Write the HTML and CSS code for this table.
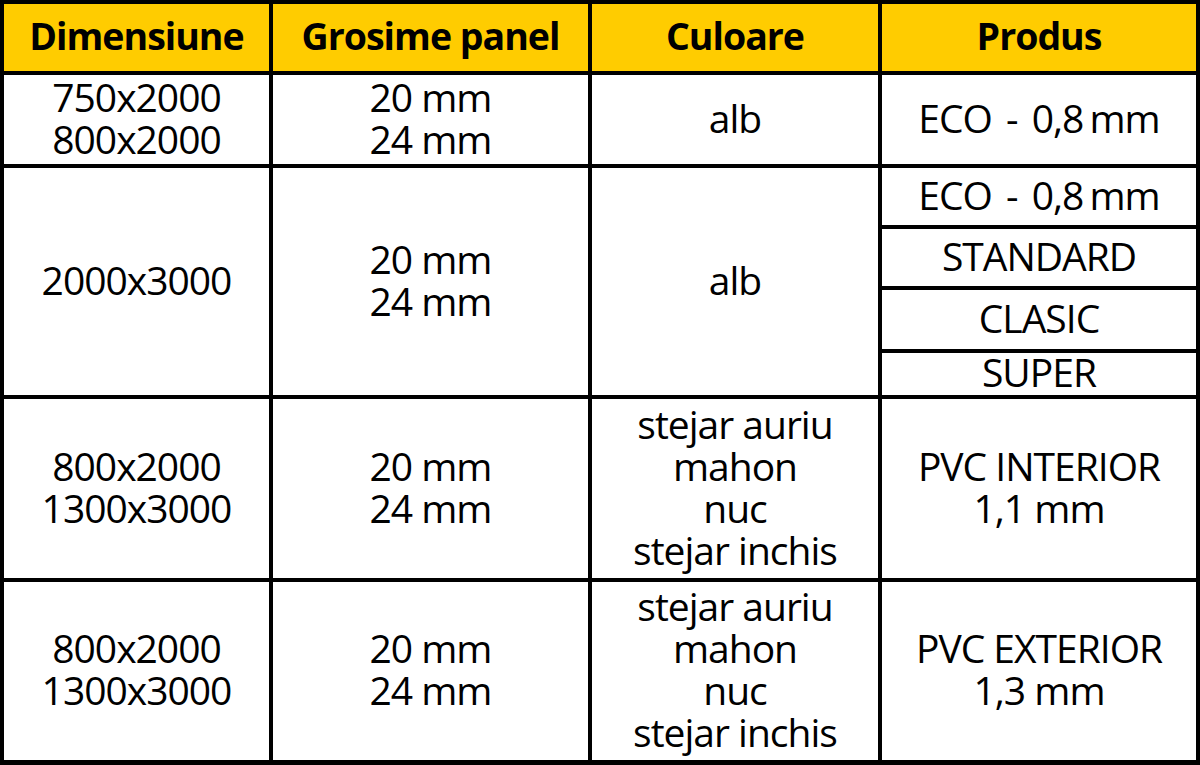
FILE: index.html
```html
<!DOCTYPE html>
<html lang="ro">
<head>
<meta charset="utf-8">
<title>Panouri</title>
<link rel="stylesheet" href="styles.css">
</head>
<body>
<div class="grid">
  <div class="cell head">Dimensiune</div>
  <div class="cell head">Grosime panel</div>
  <div class="cell head">Culoare</div>
  <div class="cell head">Produs</div>

  <div class="cell">750x2000<br>800x2000</div>
  <div class="cell">20 mm<br>24 mm</div>
  <div class="cell">alb</div>
  <div class="cell"><span class="eco">ECO - 0,8</span><span class="tight"> mm</span></div>

  <div class="cell span4">2000x3000</div>
  <div class="cell span4">20 mm<br>24 mm</div>
  <div class="cell span4">alb</div>
  <div class="cell"><span class="eco">ECO - 0,8</span><span class="tight"> mm</span></div>
  <div class="cell">STANDARD</div>
  <div class="cell">CLASIC</div>
  <div class="cell">SUPER</div>

  <div class="cell">800x2000<br>1300x3000</div>
  <div class="cell">20 mm<br>24 mm</div>
  <div class="cell">stejar auriu<br>mahon<br>nuc<br>stejar inchis</div>
  <div class="cell">PVC INTERIOR<br>1,1 mm</div>

  <div class="cell">800x2000<br>1300x3000</div>
  <div class="cell">20 mm<br>24 mm</div>
  <div class="cell">stejar auriu<br>mahon<br>nuc<br>stejar inchis</div>
  <div class="cell">PVC EXTERIOR<br>1,3 mm</div>
</div>
</body>
</html>
```
FILE: styles.css
```css
html, body {
  margin: 0;
  padding: 0;
  background: #fff;
}
.grid {
  display: grid;
  box-sizing: border-box;
  width: 1200px;
  grid-template-columns: 265px 315px 286px 314px;
  grid-template-rows: 67px 89px 57px 57px 59px 42px 179px 178px;
  gap: 4px;
  padding: 4px 4px 5px 4px;
  background: #000;
  font-family: "Open Sans", "Noto Sans", sans-serif;
  font-size: 39px;
  line-height: 42px;
  letter-spacing: -1px;
  color: #000;
}
.cell {
  background: #fff;
  display: flex;
  align-items: center;
  justify-content: center;
  text-align: center;
  padding-bottom: 4px;
  white-space: pre-line;
}
.head {
  background: #ffcc00;
  font-weight: 700;
  font-size: 37.5px;
}
.eco {
  word-spacing: 5px;
  white-space: pre;
}
.tight {
  word-spacing: -3px;
  white-space: pre;
}
.span4 {
  grid-row: span 4;
}
```
